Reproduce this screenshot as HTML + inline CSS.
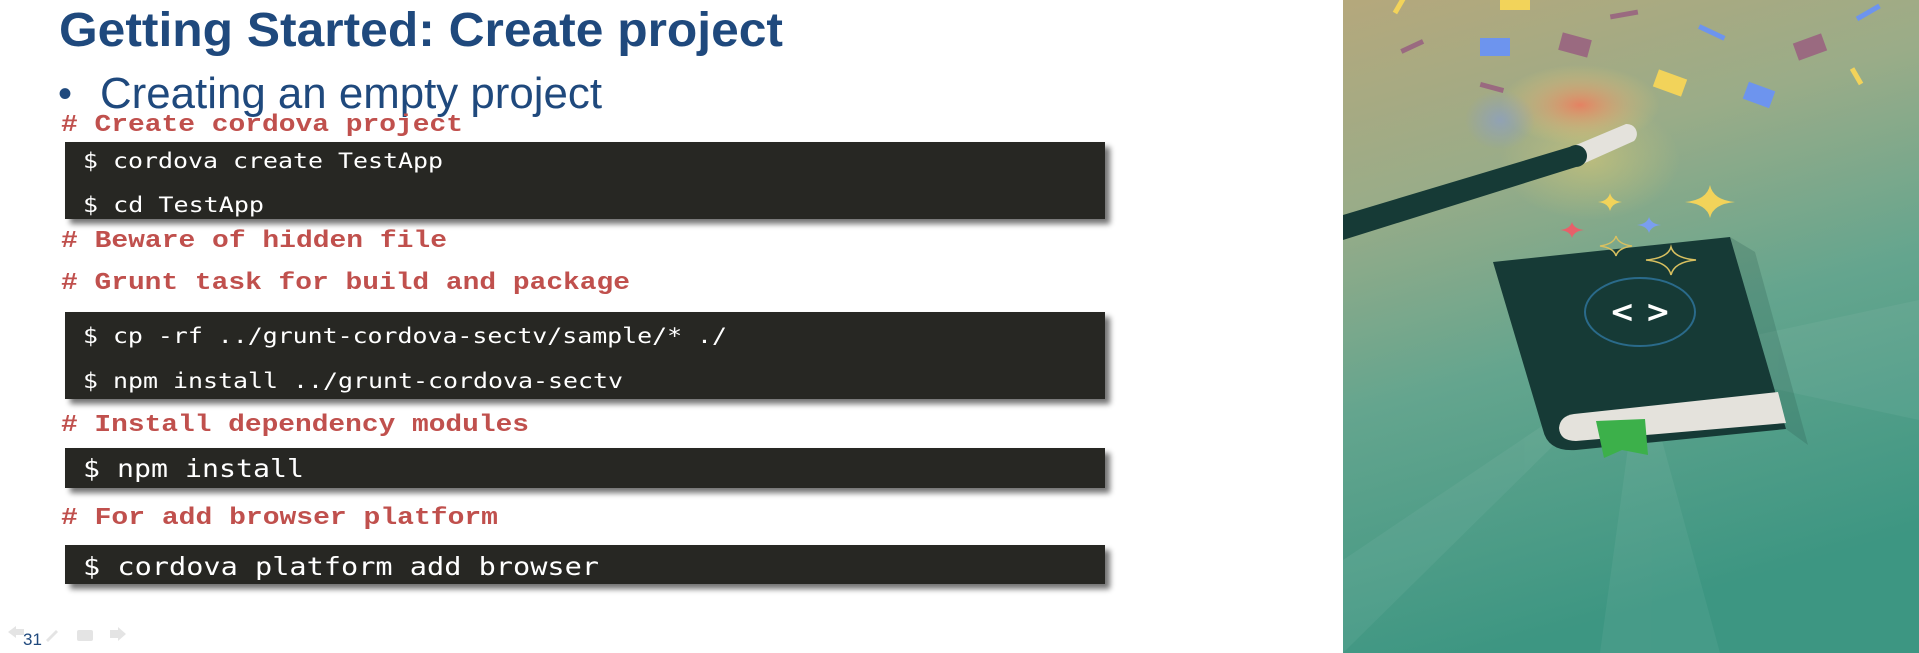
<!DOCTYPE html>
<html><head><meta charset="utf-8"><style>
html,body{margin:0;padding:0;background:#fff;width:1919px;height:653px;overflow:hidden}
svg{display:block}
</style></head><body>
<svg width="1919" height="653" viewBox="0 0 1919 653" xmlns="http://www.w3.org/2000/svg">
<defs>
<filter id="sh" x="-5%" y="-20%" width="115%" height="160%"><feGaussianBlur stdDeviation="3"/></filter>
<linearGradient id="bg" x1="0" y1="0" x2="0.25" y2="1">
<stop offset="0" stop-color="#b5a87c"/><stop offset="0.3" stop-color="#9aac88"/><stop offset="0.6" stop-color="#64a58e"/><stop offset="1" stop-color="#3d9682"/></linearGradient>
<radialGradient id="glow" cx="0.5" cy="0.5" r="0.5"><stop offset="0" stop-color="#f07a5c" stop-opacity="0.85"/><stop offset="0.6" stop-color="#e8b070" stop-opacity="0.35"/><stop offset="1" stop-color="#e8d070" stop-opacity="0"/></radialGradient>
<radialGradient id="glowb" cx="0.5" cy="0.5" r="0.5"><stop offset="0" stop-color="#8a9ec8" stop-opacity="0.7"/><stop offset="1" stop-color="#8a9ec8" stop-opacity="0"/></radialGradient>
<radialGradient id="glowy" cx="0.5" cy="0.5" r="0.5"><stop offset="0" stop-color="#e8d070" stop-opacity="0.45"/><stop offset="1" stop-color="#e8d070" stop-opacity="0"/></radialGradient>
</defs>
<g font-family="Liberation Sans, sans-serif">
<text x="59" y="46" font-size="48" font-weight="bold" fill="#1f497d" textLength="724" lengthAdjust="spacingAndGlyphs">Getting Started: Create project</text>
<text x="58" y="107" font-size="40" fill="#1f497d">•</text>
<text x="100" y="108" font-size="44" fill="#1f497d" textLength="502" lengthAdjust="spacingAndGlyphs">Creating an empty project</text>
</g>
<g font-family="Liberation Mono, monospace" font-weight="bold" fill="#c0504d" font-size="24">
<text x="61" y="131" textLength="402" lengthAdjust="spacingAndGlyphs"># Create cordova project</text>
<text x="61" y="247" textLength="386" lengthAdjust="spacingAndGlyphs"># Beware of hidden file</text>
<text x="61" y="289" textLength="569" lengthAdjust="spacingAndGlyphs"># Grunt task for build and package</text>
<text x="61" y="431" textLength="468" lengthAdjust="spacingAndGlyphs"># Install dependency modules</text>
<text x="61" y="524" textLength="437" lengthAdjust="spacingAndGlyphs"># For add browser platform</text>
</g>
<g fill="#000" opacity="0.55" filter="url(#sh)">
<rect x="70" y="147" width="1040" height="77"/>
<rect x="70" y="317" width="1040" height="87"/>
<rect x="70" y="453" width="1040" height="40"/>
<rect x="70" y="550" width="1040" height="39"/>
</g>
<g fill="#272723">
<rect x="65" y="142" width="1040" height="77"/>
<rect x="65" y="312" width="1040" height="87"/>
<rect x="65" y="448" width="1040" height="40"/>
<rect x="65" y="545" width="1040" height="39"/>
</g>
<g font-family="DejaVu Sans Mono, monospace" fill="#fff" font-size="21">
<text x="83" y="168" textLength="360" lengthAdjust="spacingAndGlyphs">$ cordova create TestApp</text>
<text x="83" y="212" textLength="181" lengthAdjust="spacingAndGlyphs">$ cd TestApp</text>
<text x="83" y="343" textLength="644" lengthAdjust="spacingAndGlyphs">$ cp -rf ../grunt-cordova-sectv/sample/* ./</text>
<text x="83" y="388" textLength="540" lengthAdjust="spacingAndGlyphs">$ npm install ../grunt-cordova-sectv</text>
<text x="83" y="477" font-size="25" textLength="221" lengthAdjust="spacingAndGlyphs">$ npm install</text>
<text x="83" y="575" font-size="25" textLength="516" lengthAdjust="spacingAndGlyphs">$ cordova platform add browser</text>
</g>
<g fill="#e4e4e4">
<path d="M8 632 L16 626 L16 629 L24 629 L24 635 L16 635 L16 638 Z"/>
<path d="M46 640 L56 630 L58 632 L48 642 Z"/>
<rect x="77" y="630" width="16" height="11" rx="2"/>
<path d="M110 630 L118 630 L118 627 L126 634 L118 641 L118 638 L110 638 Z"/>
</g>
<text x="23" y="645" font-family="Liberation Sans, sans-serif" font-size="17" fill="#1f497d">31</text>
<!-- image -->
<rect x="1343" y="0" width="576" height="653" fill="url(#bg)"/>
<g opacity="0.05" fill="#ffffff">
<polygon points="1640,360 1919,300 1919,420"/>
<polygon points="1640,360 1720,653 1600,653"/>
<polygon points="1640,360 1343,560 1343,653"/>
</g>
<ellipse cx="1590" cy="160" rx="90" ry="60" fill="url(#glowy)"/>
<ellipse cx="1580" cy="105" rx="80" ry="40" fill="url(#glow)"/>
<ellipse cx="1500" cy="120" rx="35" ry="30" fill="url(#glowb)"/>
<g>
<path d="M1343 215 L1576 145 L1576 167 L1343 240 Z" fill="#163a36"/>
<path d="M1576 145 L1626 124 A10 10 0 0 1 1634 141 L1576 167 Z" fill="#e4e2dc"/>
<circle cx="1576" cy="156" r="11" fill="#163a36"/>
</g>
<g fill="#f2d35a">
<path d="M1710 185 Q1713 200 1735 202 Q1713 204 1710 218 Q1707 204 1685 202 Q1707 200 1710 185Z"/>
<path d="M1610 193 Q1612 201 1622 202 Q1612 203 1610 211 Q1608 203 1598 202 Q1608 201 1610 193Z"/>
</g>
<path d="M1572 222 Q1574 229 1584 230 Q1574 231 1572 238 Q1570 231 1560 230 Q1570 229 1572 222Z" fill="#e8606a"/>
<path d="M1649 217 Q1651 224 1661 225 Q1651 226 1649 233 Q1647 226 1637 225 Q1647 224 1649 217Z" fill="#7a9ef0"/>
<path d="M1730 237 L1755 252 L1808 445 L1786 429 Z" fill="#2b5a4e" opacity="0.25"/>
<path d="M1493 262 L1730 237 L1786 429 L1576 450 Q1548 452 1543 430 Z" fill="#163a36"/>
<path d="M1574 414 L1778 392 L1786 423 L1576 441 Q1560 441 1559 428 Q1560 416 1574 414Z" fill="#e4e2dc"/>
<path d="M1596 421 L1645 419 L1648 455 L1622 450 L1604 458 Z" fill="#3cb04a"/>
<g fill="none" stroke="#d8c060" stroke-width="1.5">
<path d="M1616 236 Q1618 244 1632 246 Q1618 248 1616 256 Q1614 248 1600 246 Q1614 244 1616 236Z"/>
<path d="M1671 247 Q1674 258 1696 260 Q1674 262 1671 275 Q1668 262 1646 260 Q1668 258 1671 247Z"/>
</g>
<ellipse cx="1640" cy="312" rx="55" ry="34" fill="none" stroke="#2a6a8a" stroke-width="2"/>
<text x="1640" y="322" text-anchor="middle" font-family="DejaVu Sans, sans-serif" font-weight="bold" font-size="30" fill="#fff">&lt; &gt;</text>
<g>
<rect x="1480" y="38" width="30" height="18" fill="#6d94ee"/>
<rect x="1560" y="36" width="30" height="18" fill="#9a6a80" transform="rotate(15 1575 45)"/>
<rect x="1655" y="74" width="30" height="18" fill="#f2d35a" transform="rotate(20 1670 83)"/>
<rect x="1745" y="86" width="28" height="18" fill="#6d94ee" transform="rotate(20 1759 95)"/>
<rect x="1795" y="38" width="30" height="18" fill="#9a6a80" transform="rotate(-20 1810 47)"/>
<rect x="1500" y="0" width="30" height="10" fill="#f2d35a"/>
<rect x="1400" y="44" width="24" height="5" fill="#9a6a80" transform="rotate(-25 1412 46)"/>
<rect x="1480" y="85" width="24" height="5" fill="#9a6a80" transform="rotate(15 1492 87)"/>
<rect x="1610" y="12" width="28" height="5" fill="#9a6a80" transform="rotate(-10 1624 14)"/>
<rect x="1698" y="30" width="28" height="5" fill="#6d94ee" transform="rotate(25 1712 32)"/>
<rect x="1855" y="10" width="26" height="5" fill="#6d94ee" transform="rotate(-30 1868 12)"/>
<rect x="1848" y="74" width="18" height="5" fill="#f2d35a" transform="rotate(60 1857 76)"/>
<rect x="1390" y="3" width="18" height="5" fill="#f2d35a" transform="rotate(-60 1399 5)"/>
</g>
</svg>
</body></html>
